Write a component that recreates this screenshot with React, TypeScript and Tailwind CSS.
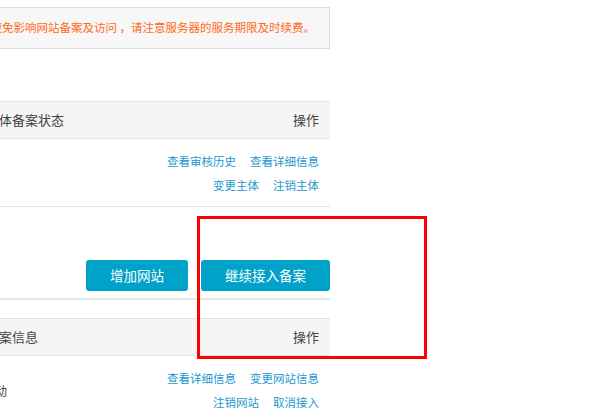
import React from 'react';

const font = { fontFamily: '"Microsoft YaHei", "Noto Sans CJK SC", "Liberation Sans", sans-serif' };

function LinkRow({ items }: { items: string[] }) {
  return (
    <div className="flex justify-end gap-[14px] leading-[24px]">
      {items.map((t) => (
        <a key={t} className="text-[11.5px] text-[#1c97cf] cursor-pointer">
          {t}
        </a>
      ))}
    </div>
  );
}

function TableHead({ title, offset }: { title: string; offset: string }) {
  return (
    <div className="flex h-[38px] items-center justify-between border-y border-[#e4e4e4] bg-[#f5f5f5] text-[13px] text-[#444]">
      <span className={`whitespace-nowrap ${offset}`}>{title}</span>
      <span className="pr-[11px]">操作</span>
    </div>
  );
}

export default function App() {
  return (
    <div className="relative h-[419px] w-[600px] overflow-hidden bg-white" style={font}>
      <div className="w-[330px] pt-[7px]">
        {/* notice */}
        <div className="flex h-[42px] items-center overflow-hidden border border-l-0 border-[#dedede] bg-[#f7f7f7]">
          <p className="-ml-[21px] whitespace-nowrap text-[11.5px] text-[#ff6a1a]">
            为避免影响网站备案及访问 ，请注意服务器的服务期限及时续费。
          </p>
        </div>

        {/* subject table */}
        <div className="mt-[52px]">
          <TableHead title="主体备案状态" offset="-ml-[14px]" />
          <div className="flex h-[68px] flex-col justify-center border-b border-[#e4e4e4] pr-[11px]">
            <LinkRow items={['查看审核历史', '查看详细信息']} />
            <LinkRow items={['变更主体', '注销主体']} />
          </div>
        </div>

        {/* actions */}
        <div className="mt-[53px] flex justify-end gap-[13px]">
          <button className="h-[31px] w-[102px] rounded-[3px] bg-[#00a2ca] text-[13.5px] text-white">
            增加网站
          </button>
          <button className="h-[31px] w-[129px] rounded-[3px] bg-[#00a2ca] text-[13.5px] text-white">
            继续接入备案
          </button>
        </div>
        <div className="mt-[7px] h-[2px] bg-[#e6e6e6]" />

        {/* website table */}
        <div className="mt-[18px]">
          <TableHead title="网站备案信息" offset="-ml-[40px]" />
          <div className="flex h-[68px] items-center justify-between pr-[11px]">
            <span className="-ml-[5px] mt-[1px] text-[12px] text-[#444]">动</span>
            <div className="flex flex-col">
              <LinkRow items={['查看详细信息', '变更网站信息']} />
              <LinkRow items={['注销网站', '取消接入']} />
            </div>
          </div>
        </div>
      </div>

      {/* red annotation frame */}
      <div className="absolute left-[197px] top-[216px] h-[143px] w-[230px] border-[3px] border-[#ff0000]" />
    </div>
  );
}
